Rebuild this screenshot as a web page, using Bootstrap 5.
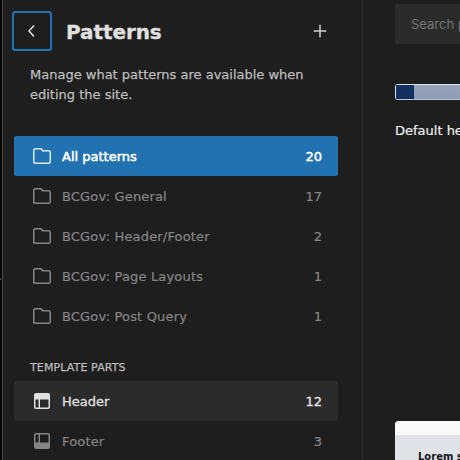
<!DOCTYPE html>
<html lang="en">
<head>
<meta charset="utf-8">
<title>Patterns</title>
<link href="https://cdn.jsdelivr.net/npm/bootstrap@5.3.0/dist/css/bootstrap.min.css" rel="stylesheet">
<style>
body{background:#1e1e1e;color:#e0e0e0;font:13px/20px "DejaVu Sans",sans-serif;height:460px}
.edge{width:2px;background:#050507;flex:none;padding-top:278px}
.edge i{display:block;height:2px;width:1px;background:#24508c}
.side{width:361px;flex:none;border-left:1px solid #484848;border-right:1px solid #303030;padding:11px 24px 0 9px}
.back{width:40px;height:40px;border:2px solid #2271b1;border-radius:3px;color:#e0e0e0;background:transparent}
.side h1{font-size:20px;font-weight:700;line-height:24px;margin:1px 0 0 14px;letter-spacing:-.08px;color:#e0e0e0;-webkit-text-stroke:.3px}
.desc{margin:14px 0 31px 18px;color:#bdbdbd;-webkit-text-stroke:.25px}
.side .list-group{margin-left:2px;width:324px}
.side .list-group-item{height:40px;padding:0 16px;border:0;border-radius:2px;background:transparent;color:#858585;gap:8px;-webkit-text-stroke:.2px}
.side .list-group-item svg{flex:none}
.side .list-group-item span{padding-top:2px;letter-spacing:.17px}
.side .list-group-item .ms-auto{letter-spacing:0}
.side .list-group-item.active{background:#2271b1;color:#fff;margin:0;-webkit-text-stroke:.5px}
.side .list-group-item.active span{letter-spacing:0}
.side .list-group-item.active svg{color:#dcebf7}
.side .list-group-item.hovered{background:#2b2b2b;color:#e0e0e0;-webkit-text-stroke:.3px}
.side .list-group-item.hovered span{letter-spacing:0}
.side h2{font-size:11px;font-weight:400;line-height:16px;margin:24px 0 5px 18px;letter-spacing:.12px;color:#bdbdbd;-webkit-text-stroke:.25px}
.main{padding:4px 0 0 32px;width:97px;flex:none;white-space:nowrap}
.search{height:40px;background:#2b2b2b;border-radius:2px 0 0 2px;padding-left:16px;font-family:Inter,sans-serif;color:#757575}
.thumb{height:16px;margin-top:40px;border:1px solid #dce3ea;border-right:0;border-bottom-color:#b9c7d6;border-radius:3px 0 0 3px;background:linear-gradient(#97a4bb,#8c9bb7)}
.thumb i{width:18px;background:#14305f}
.caption{margin-top:21px;color:#f0f0f0;-webkit-text-stroke:.2px}
.preview{margin-top:280px;height:39px;border-radius:4px 0 0 0;background:#dfe3e8;color:#16181c}
.preview-top{height:14px;background:#fafafa}
.preview p{font-size:10px;font-weight:700;line-height:14px;margin:0;padding:15px 0 0 23px}
</style>
<script src="https://cdn.jsdelivr.net/npm/bootstrap@5.3.0/dist/js/bootstrap.bundle.min.js"></script>
</head>
<body class="d-flex overflow-hidden">
<svg width="0" height="0" class="position-absolute">
<symbol id="folder" viewBox="0 0 24 24"><path fill="none" stroke="currentColor" stroke-width="1.5" d="M3.75 6.5c0-1 .75-1.75 1.75-1.75h5.2c.4 0 .8.2 1 .5l.9 1.5h5.9c1 0 1.75.75 1.75 1.75v9c0 1-.75 1.75-1.75 1.75h-13c-1 0-1.75-.75-1.75-1.75z"/></symbol>
</svg>
<div class="edge"><i></i></div>
<aside class="side">
<div class="d-flex align-items-center">
<button class="back p-0 d-flex align-items-center justify-content-center" aria-label="Back"><svg width="24" height="24" viewBox="0 0 24 24" fill="currentColor"><path d="M14.6 7l-1.2-1L8 12l5.4 6 1.2-1-4.6-5z"/></svg></button>
<h1>Patterns</h1>
<svg class="ms-auto" style="margin-right:6px" width="24" height="24" viewBox="0 0 24 24" fill="#d0d0d0"><path d="M11.25 5.75h1.5v5.5h5.5v1.5h-5.5v5.5h-1.5v-5.5h-5.5v-1.5h5.5z"/></svg>
</div>
<p class="desc">Manage what patterns are available when editing the site.</p>
<div class="list-group">
<a class="list-group-item active d-flex align-items-center"><svg width="24" height="24"><use href="#folder"/></svg><span>All patterns</span><span class="ms-auto">20</span></a>
<a class="list-group-item d-flex align-items-center"><svg width="24" height="24"><use href="#folder"/></svg><span>BCGov: General</span><span class="ms-auto">17</span></a>
<a class="list-group-item d-flex align-items-center"><svg width="24" height="24"><use href="#folder"/></svg><span>BCGov: Header/Footer</span><span class="ms-auto">2</span></a>
<a class="list-group-item d-flex align-items-center"><svg width="24" height="24"><use href="#folder"/></svg><span>BCGov: Page Layouts</span><span class="ms-auto">1</span></a>
<a class="list-group-item d-flex align-items-center"><svg width="24" height="24"><use href="#folder"/></svg><span>BCGov: Post Query</span><span class="ms-auto">1</span></a>
</div>
<h2>TEMPLATE PARTS</h2>
<div class="list-group">
<a class="list-group-item hovered d-flex align-items-center"><svg width="24" height="24" viewBox="0 0 24 24" fill="currentColor"><path fill-rule="evenodd" d="M6 4h12a2 2 0 0 1 2 2v12a2 2 0 0 1-2 2H6a2 2 0 0 1-2-2V6a2 2 0 0 1 2-2zM5.5 10.5V18c0 .3.2.5.5.5h2.5v-8zM10 10.5v8h8c.3 0 .5-.2.5-.5v-7.5z"/></svg><span>Header</span><span class="ms-auto">12</span></a>
<a class="list-group-item d-flex align-items-center"><svg width="24" height="24" viewBox="0 0 24 24" fill="currentColor"><path fill-rule="evenodd" d="M6 4h12a2 2 0 0 1 2 2v12a2 2 0 0 1-2 2H6a2 2 0 0 1-2-2V6a2 2 0 0 1 2-2zM5.5 13.5V6c0-.3.2-.5.5-.5h2.5v8zM10 13.5v-8h8c.3 0 .5.2.5.5v7.5z"/></svg><span>Footer</span><span class="ms-auto">3</span></a>
</div>
</aside>
<main class="main overflow-hidden">
<div class="search d-flex align-items-center">Search patterns</div>
<div class="thumb d-flex"><i></i></div>
<div class="caption">Default header</div>
<div class="preview overflow-hidden"><div class="preview-top"></div><p>Lorem sit</p></div>
</main>
</body>
</html>
